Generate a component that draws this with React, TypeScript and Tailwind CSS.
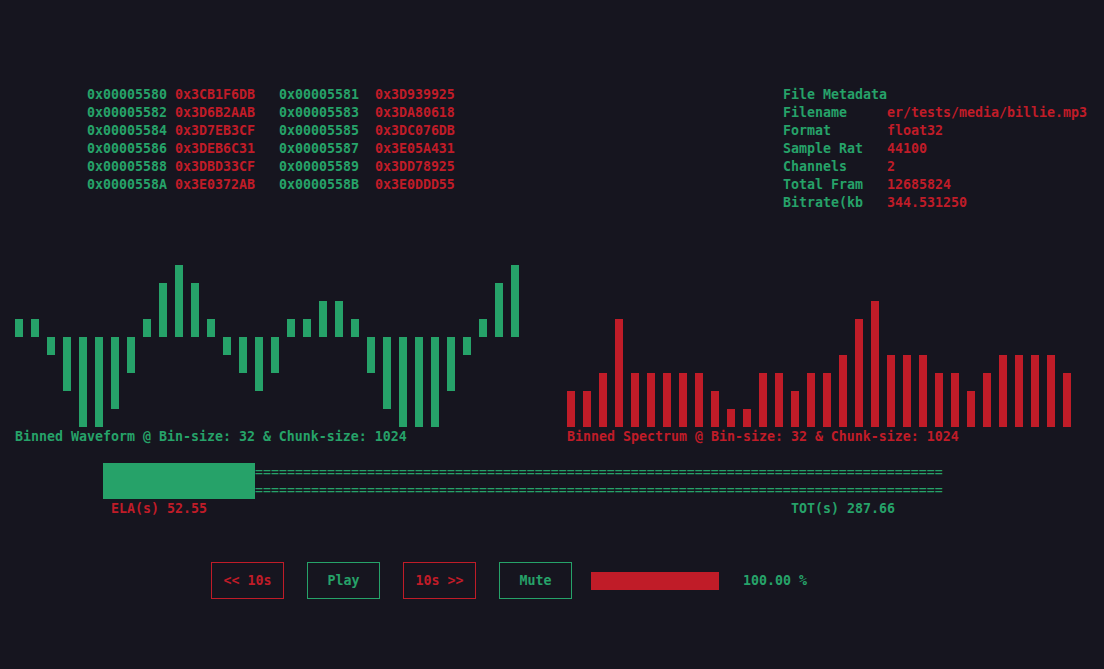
import React from "react";

const G = "text-[#26a269]";
const R = "text-[#c01c28]";

const hexRows: [string, string, string, string][] = [
  ["0x00005580", "0x3CB1F6DB", "0x00005581", "0x3D939925"],
  ["0x00005582", "0x3D6B2AAB", "0x00005583", "0x3DA80618"],
  ["0x00005584", "0x3D7EB3CF", "0x00005585", "0x3DC076DB"],
  ["0x00005586", "0x3DEB6C31", "0x00005587", "0x3E05A431"],
  ["0x00005588", "0x3DBD33CF", "0x00005589", "0x3DD78925"],
  ["0x0000558A", "0x3E0372AB", "0x0000558B", "0x3E0DDD55"],
];

const meta: [string, string][] = [
  ["Filename", "er/tests/media/billie.mp3"],
  ["Format", "float32"],
  ["Sample Rat", "44100"],
  ["Channels", "2"],
  ["Total Fram", "12685824"],
  ["Bitrate(kb", "344.531250"],
];

const wave = [1, 1, -1, -3, -5, -5, -4, -2, 1, 3, 4, 3, 1, -1, -2, -3, -2, 1, 1, 2, 2, 1, -2, -4, -5, -5, -5, -3, -1, 1, 3, 4];
const spec = [2, 2, 3, 6, 3, 3, 3, 3, 3, 2, 1, 1, 3, 3, 2, 3, 3, 4, 6, 7, 4, 4, 4, 3, 3, 2, 3, 4, 4, 4, 4, 3];

function Btn({ label, red }: { label: string; red?: boolean }) {
  return (
    <div
      className={`w-[73px] h-[37px] flex items-center justify-center border ${
        red ? "border-[#c01c28] text-[#c01c28]" : "border-[#26a269] text-[#26a269]"
      }`}
    >
      <span className="whitespace-pre leading-[18px] pt-[1px]">{label}</span>
    </div>
  );
}

export default function App() {
  return (
    <div
      className="w-[1104px] h-[669px] overflow-hidden bg-[#16151f] font-bold text-[13.29px] leading-[20px] pt-[85px]"
      style={{ fontFamily: '"DejaVu Sans Mono", "Liberation Mono", monospace' }}
    >
      {/* Top: hex dump and metadata */}
      <div className="flex h-[126px]">
        <div className="ml-[87px] w-[696px] flex flex-col">
          {hexRows.map((r, i) => (
            <div key={i} className="whitespace-pre h-[18px]">
              <span className={G}>{r[0]}</span>
              <span> </span>
              <span className={R}>{r[1]}</span>
              <span>   </span>
              <span className={G}>{r[2]}</span>
              <span>  </span>
              <span className={R}>{r[3]}</span>
            </div>
          ))}
        </div>
        <div className="flex flex-col">
          <div className={`${G} whitespace-pre h-[18px]`}>File Metadata</div>
          {meta.map(([k, v]) => (
            <div key={k} className="flex h-[18px] whitespace-pre">
              <span className={`${G} w-[104px]`}>{k}</span>
              <span className={R}>{v}</span>
            </div>
          ))}
        </div>
      </div>

      {/* Charts */}
      <div className="flex mt-[54px] h-[162px]">
        <div className="ml-[15px] w-[552px] flex gap-[8px]">
          {wave.map((v, i) => (
            <div key={i} className="w-[8px] flex flex-col">
              <div className="h-[72px] flex flex-col justify-end">
                {v > 0 && <div className="bg-[#26a269] w-[8px]" style={{ height: v * 18 }} />}
              </div>
              <div className="h-[90px] flex flex-col justify-start">
                {v < 0 && <div className="bg-[#26a269] w-[8px]" style={{ height: -v * 18 }} />}
              </div>
            </div>
          ))}
        </div>
        <div className="flex items-end gap-[8px]">
          {spec.map((v, i) => (
            <div key={i} className="w-[8px] bg-[#c01c28]" style={{ height: v * 18 }} />
          ))}
        </div>
      </div>
      <div className="flex h-[18px] whitespace-pre">
        <div className={`ml-[15px] w-[552px] ${G}`}>Binned Waveform @ Bin-size: 32 &amp; Chunk-size: 1024</div>
        <div className={R}>Binned Spectrum @ Bin-size: 32 &amp; Chunk-size: 1024</div>
      </div>

      {/* Progress */}
      <div className="flex mt-[18px] ml-[103px] h-[36px]">
        <div className="w-[152px] h-[36px] bg-[#26a269]" />
        <div className={`${G} flex flex-col whitespace-pre font-normal`}>
          <div className="h-[18px]">{"=".repeat(86)}</div>
          <div className="h-[18px]">{"=".repeat(86)}</div>
        </div>
      </div>
      <div className="flex h-[18px] whitespace-pre">
        <div className={`ml-[111px] w-[680px] ${R}`}>ELA(s) 52.55</div>
        <div className={G}>TOT(s) 287.66</div>
      </div>

      {/* Controls */}
      <div className="flex items-center mt-[45px] ml-[211px] gap-[23px] h-[37px]">
        <Btn label="<< 10s" red />
        <Btn label="Play" />
        <Btn label="10s >>" red />
        <Btn label="Mute" />
        <div className="flex items-center gap-[24px] ml-[-4px]">
          <div className="w-[128px] h-[18px] bg-[#c01c28]" />
          <span className={`${G} whitespace-pre leading-[18px] pt-[1px]`}>100.00 %</span>
        </div>
      </div>
    </div>
  );
}
